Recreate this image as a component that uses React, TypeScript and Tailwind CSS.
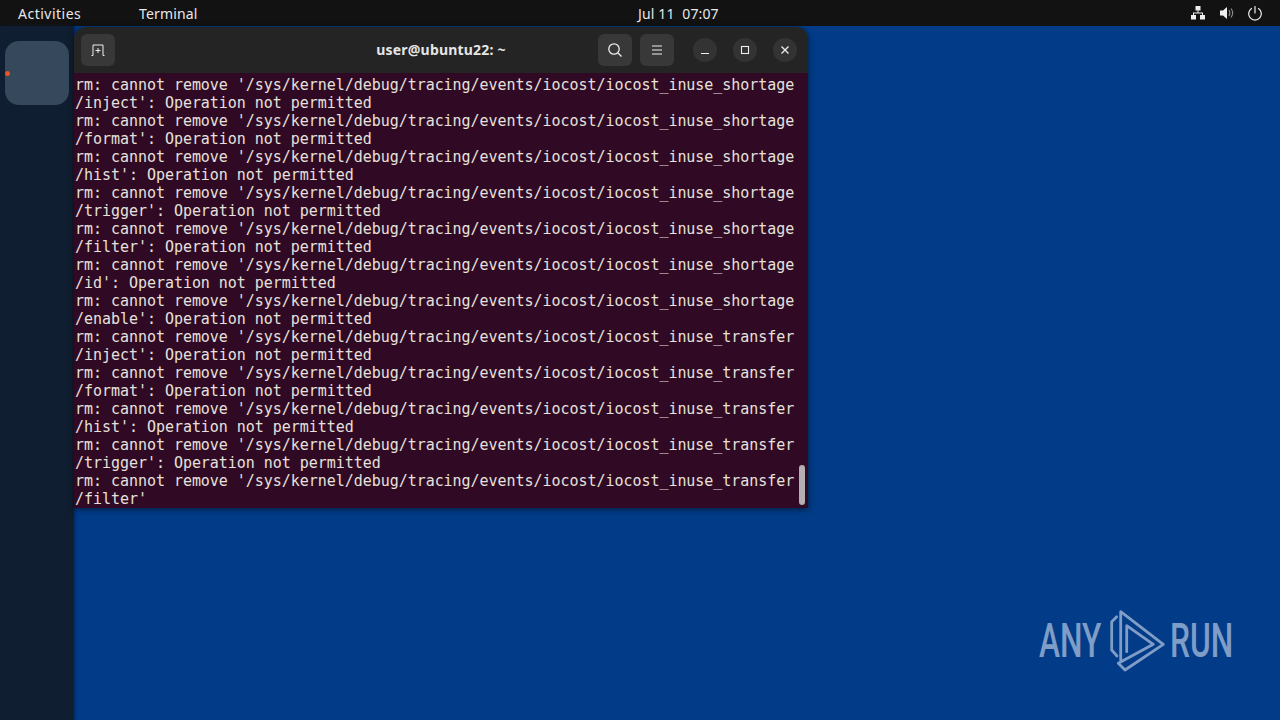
const lines: string[] = [
  "rm: cannot remove '/sys/kernel/debug/tracing/events/iocost/iocost_inuse_shortage",
  "/inject': Operation not permitted",
  "rm: cannot remove '/sys/kernel/debug/tracing/events/iocost/iocost_inuse_shortage",
  "/format': Operation not permitted",
  "rm: cannot remove '/sys/kernel/debug/tracing/events/iocost/iocost_inuse_shortage",
  "/hist': Operation not permitted",
  "rm: cannot remove '/sys/kernel/debug/tracing/events/iocost/iocost_inuse_shortage",
  "/trigger': Operation not permitted",
  "rm: cannot remove '/sys/kernel/debug/tracing/events/iocost/iocost_inuse_shortage",
  "/filter': Operation not permitted",
  "rm: cannot remove '/sys/kernel/debug/tracing/events/iocost/iocost_inuse_shortage",
  "/id': Operation not permitted",
  "rm: cannot remove '/sys/kernel/debug/tracing/events/iocost/iocost_inuse_shortage",
  "/enable': Operation not permitted",
  "rm: cannot remove '/sys/kernel/debug/tracing/events/iocost/iocost_inuse_transfer",
  "/inject': Operation not permitted",
  "rm: cannot remove '/sys/kernel/debug/tracing/events/iocost/iocost_inuse_transfer",
  "/format': Operation not permitted",
  "rm: cannot remove '/sys/kernel/debug/tracing/events/iocost/iocost_inuse_transfer",
  "/hist': Operation not permitted",
  "rm: cannot remove '/sys/kernel/debug/tracing/events/iocost/iocost_inuse_transfer",
  "/trigger': Operation not permitted",
  "rm: cannot remove '/sys/kernel/debug/tracing/events/iocost/iocost_inuse_transfer",
  "/filter'",
];

function HeaderButton({ children }: { children: React.ReactNode }) {
  return (
    <div className="w-[34px] h-[32px] rounded-[6px] bg-[#383838] flex items-center justify-center">
      {children}
    </div>
  );
}

function WinButton({ children }: { children: React.ReactNode }) {
  return (
    <div className="w-[24px] h-[24px] rounded-full bg-[#333333] flex items-center justify-center">
      {children}
    </div>
  );
}

export default function App() {
  return (
    <div className="w-[1280px] h-[720px] overflow-hidden flex flex-col bg-[#023c88] font-['Noto_Sans',sans-serif]">
      <div className="h-[26px] shrink-0 bg-[#121212] flex items-center relative text-[14px] text-[#e8e8e8] tracking-[0.15px]">
        <div className="w-[139px] pl-[18px] tracking-[0.5px]">Activities</div>
        <div>Terminal</div>
        <div className="absolute left-[638px] top-[3px] whitespace-pre">Jul 11  07:07</div>
        <div className="absolute left-[1190px] top-[5px] flex items-center gap-[13px]">
          <svg width="16" height="16" viewBox="0 0 16 16" fill="#eee">
            <rect x="5.500" y="1" width="5" height="4.500" />
            <rect x="1" y="10" width="5" height="4.500" />
            <rect x="10" y="10" width="5" height="4.500" />
            <path d="M7.500 5.500h1V7.500H13V10h-1V8.500H4V10H3V7.500h4.500z" />
          </svg>
          <svg width="16" height="16" viewBox="0 0 16 16" fill="#eee">
            <path d="M1 5.500h3L8 2v12l-4-3.500H1z" />
            <path d="M10 5c1 1.800 1 4.200 0 6M12 3.500c2 2.700 2 6.300 0 9" fill="none" stroke="#888" strokeWidth="1.200" />
          </svg>
          <svg width="16" height="16" viewBox="0 0 16 16" fill="none" stroke="#eee" strokeWidth="1.200" strokeLinecap="round">
            <path d="M7 1.500v6.500" />
            <path d="M3.500 3.500a6.300 6.300 0 1 0 7 0" />
          </svg>
        </div>
      </div>
      <div className="flex-1 flex min-h-0">
        <div className="w-[74px] shrink-0 bg-[#0f1e30] relative pt-[15px] pl-[5px] shadow-[1px_0_3px_rgba(5,20,60,0.6)]">
          <div className="w-[64px] h-[64px] rounded-[14px] bg-[#36485c]" />
          <div className="absolute left-[5px] top-[45px] w-[5px] h-[5px] rounded-full bg-[#e95420]" />
        </div>
        <div className="flex-1 relative">
          <div className="w-[734px] h-[481px] mt-[1px] rounded-t-[12px] overflow-hidden shadow-[0_1px_6px_rgba(0,0,0,0.6)] flex flex-col">
            <div className="h-[46px] shrink-0 bg-[#242424] flex items-center relative">
              <div className="ml-[7px]">
                <HeaderButton>
                  <svg width="16" height="16" viewBox="0 0 16 16" fill="none" stroke="#eee" strokeWidth="1">
                    <path d="M1.500 13.500H3V3h10v10.500h1.500" />
                    <path d="M8 6v5M5.500 8.500h5" />
                  </svg>
                </HeaderButton>
              </div>
              <div className="absolute left-0 right-0 top-[13px] text-center text-[14px] font-bold text-[#e6e6e6] leading-[20px] tracking-[0.2px]">user@ubuntu22: ~</div>
              <div className="ml-auto flex items-center gap-[8px]">
                <HeaderButton>
                  <svg width="16" height="16" viewBox="0 0 16 16" fill="none" stroke="#eee" strokeWidth="1.300">
                    <circle cx="7" cy="7" r="5.200" />
                    <path d="M11 11l3.500 3.500" />
                  </svg>
                </HeaderButton>
                <HeaderButton>
                  <svg width="14" height="14" viewBox="0 0 14 14" stroke="#eee" strokeWidth="1.100">
                    <path d="M2 3h10M2 7h10M2 11h10" />
                  </svg>
                </HeaderButton>
              </div>
              <div className="ml-[19px] mr-[11px] flex items-center gap-[16px]">
                <WinButton>
                  <svg width="10" height="10" viewBox="0 0 10 10" stroke="#eee" strokeWidth="1.100">
                    <path d="M1 8.500h8" />
                  </svg>
                </WinButton>
                <WinButton>
                  <svg width="10" height="10" viewBox="0 0 10 10" fill="none" stroke="#eee" strokeWidth="1.100">
                    <rect x="1.500" y="1.500" width="7" height="7" />
                  </svg>
                </WinButton>
                <WinButton>
                  <svg width="10" height="10" viewBox="0 0 10 10" stroke="#eee" strokeWidth="1.300">
                    <path d="M1.500 1.500l7 7M8.500 1.500l-7 7" />
                  </svg>
                </WinButton>
              </div>
            </div>
            <div className="flex-1 bg-[#300a24] relative pl-[1px] text-[#e6e1dc] font-['DejaVu_Sans_Mono',monospace] text-[15px] leading-[18px] tracking-[-0.04px] whitespace-pre pt-[3px]">
              {lines.map((l, i) => (
                <div key={i} className="h-[18px]">{l}</div>
              ))}
              <div className="absolute right-[3px] top-[392px] w-[6px] h-[40px] rounded-full bg-[#b5aeb2]" />
            </div>
          </div>
          <div className="absolute left-[965px] top-[584px] h-[62px] w-[192px] text-[#7f9dc6] font-['Roboto',sans-serif] font-medium text-[48px] leading-[62px]">
            <span className="absolute left-0 top-0 origin-left scale-x-[0.66]">ANY</span>
            <svg className="absolute left-[69px] top-0" width="62" height="62" viewBox="0 0 62 62" fill="none" stroke="#7f9dc6" strokeWidth="2.800" strokeLinejoin="round" strokeLinecap="round">
              <path d="M8.700 6.700L3.700 11.700V40L9 46" />
              <path d="M12.700 50V1.700L55.300 34.300L17 60L10.300 53.300L45.300 34.300L18.700 15.700V41.700" />
            </svg>
            <span className="absolute left-[131px] top-0 origin-left scale-x-[0.66]">RUN</span>
          </div>
        </div>
      </div>
    </div>
  );
}
